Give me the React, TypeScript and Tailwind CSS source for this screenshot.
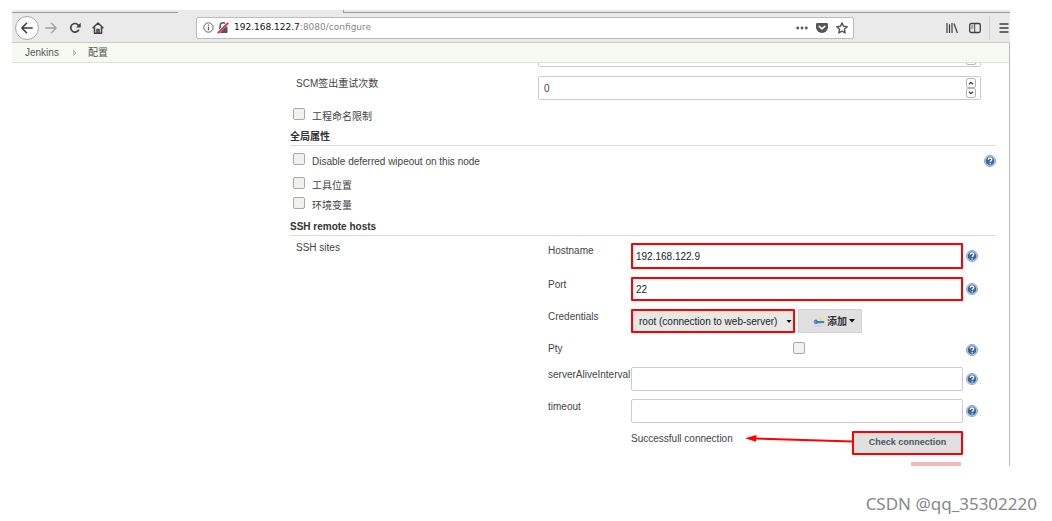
import type { ReactNode } from "react";

const nodeProperties = [
  { id: "wipeout", label: "Disable deferred wipeout on this node", help: true, className: "h-6" },
  { id: "tools", label: "工具位置", help: false, className: "h-5" },
  { id: "env", label: "环境变量", help: false, className: "h-5" },
];

function HelpIcon() {
  return (
    <button type="button" aria-label="Help" className="block h-3 w-3 shrink-0">
      <svg viewBox="0 0 12 12" className="h-3 w-3">
        <circle cx="6" cy="6" r="5.5" fill="#dbe5f3" stroke="#6d8bbb" strokeWidth="0.8" />
        <circle cx="6" cy="6" r="4.4" fill="#3a65a5" />
        <path d="M4.300 4.800C4.300 3.400 5 3 6 3s1.800.6 1.800 1.600C7.800 5.700 6.300 5.700 6.300 7" fill="none" stroke="#fff" strokeWidth="1.3" />
        <circle cx="6.2" cy="8.8" r="0.8" fill="#fff" />
      </svg>
    </button>
  );
}

function Checkbox({ id }: { id: string }) {
  return (
    <input
      id={id}
      type="checkbox"
      className="block h-3 w-3 shrink-0 appearance-none rounded-[2px] border border-[#a9a9a5] bg-[#f1f1f0] checked:bg-[#3465a4]"
    />
  );
}

function Spinner() {
  return (
    <div className="absolute top-[2px] right-[5px] flex flex-col">
      <button type="button" aria-label="Increase" className="flex h-[10px] w-[10px] items-center justify-center rounded-[2px] border border-[#b5b5b5] bg-white">
        <svg viewBox="0 0 6 4" className="h-1 w-[6px]">
          <path d="M1 3.300L3 1.300L5 3.300" fill="none" stroke="#444" strokeWidth="1.3" />
        </svg>
      </button>
      <button type="button" aria-label="Decrease" className="flex h-[10px] w-[10px] items-center justify-center rounded-[2px] border border-[#b5b5b5] bg-white">
        <svg viewBox="0 0 6 4" className="h-1 w-[6px]">
          <path d="M1 .7L3 2.700L5 .7" fill="none" stroke="#444" strokeWidth="1.3" />
        </svg>
      </button>
    </div>
  );
}

function NumberField({ id, label, value }: { id: string; label?: string; value: string }) {
  return (
    <div className="relative h-6 w-full">
      <input
        id={id}
        type="number"
        aria-label={label}
        defaultValue={value}
        className="block h-6 w-full appearance-none rounded-[2px] border border-[#ccc] bg-white px-[5px] [appearance:textfield]"
      />
      <Spinner />
    </div>
  );
}

function SectionTitle({ children }: { children: ReactNode }) {
  return <h2 className="mr-[13px] h-[19px] border-b border-[#ddd] leading-5 font-bold text-[#333]">{children}</h2>;
}

function SiteRow({ id, label, help, children }: { id?: string; label?: string; help?: boolean; children: ReactNode }) {
  return (
    <div className="flex">
      <label htmlFor={id} className="w-[83px] shrink-0 leading-4 whitespace-nowrap">
        {label}
      </label>
      <div className="min-w-0 flex-1">{children}</div>
      <div className="flex w-[46px] shrink-0 items-center pl-[3px]">{help && <HelpIcon />}</div>
    </div>
  );
}

function TabStrip() {
  return (
    <div className="flex h-[3px] bg-[#eaeaea]">
      <div className="w-[166px] border-b border-[#999]" />
      <div className="w-[165px]" />
      <div className="flex-1 border-b border-l border-[#999]" />
    </div>
  );
}

function Toolbar() {
  return (
    <div className="flex h-[30px] items-center border-b border-[#ccc] bg-[#eaeaea] text-[#3f3f3f]">
      <div className="flex w-[184px] shrink-0 items-center pl-[3px]">
        <button type="button" aria-label="Back" className="flex h-6 w-6 items-center justify-center rounded-full border border-[#aaa] bg-[#fbfbfb]">
          <svg viewBox="0 0 12 12" className="h-3 w-3" fill="none" stroke="currentColor" strokeWidth="1.5" strokeLinecap="round" strokeLinejoin="round">
            <path d="M11.200 6H1M5.500 1.200L.9 6l4.600 4.800" />
          </svg>
        </button>
        <button type="button" aria-label="Forward" className="ml-[6px] text-[#a0a0a0]">
          <svg viewBox="0 0 12 12" className="h-3 w-3" fill="none" stroke="currentColor" strokeWidth="1.3" strokeLinecap="round" strokeLinejoin="round">
            <path d="M.8 6H11M6.500 1.200L11.100 6l-4.600 4.800" />
          </svg>
        </button>
        <button type="button" aria-label="Reload" className="ml-3">
          <svg viewBox="0 0 12 12" className="h-3 w-3" fill="none" stroke="currentColor" strokeWidth="1.7">
            <path d="M9.900 7.600A4.300 4.300 0 1 1 9.500 3.300" />
            <path d="M11.700.7V5.400H7z" fill="currentColor" stroke="none" />
          </svg>
        </button>
        <button type="button" aria-label="Home" className="ml-[11px]">
          <svg viewBox="0 0 12 12" className="h-3 w-3" fill="none" stroke="currentColor" strokeWidth="1.5" strokeLinejoin="round">
            <path d="M.6 6.300L6 1l5.400 5.300M2.500 5.500v5.800h7V5.500" />
            <path d="M5 11.300V7.500h2v3.800" />
          </svg>
        </button>
      </div>
      <div className="flex h-[22px] min-w-0 flex-1 items-center rounded-[2px] border border-[#bbb] bg-white pr-[5px] pl-[6px]">
        <svg viewBox="0 0 11 11" className="h-[11px] w-[11px] shrink-0" fill="none" stroke="#555">
          <circle cx="5.500" cy="5.500" r="4.700" strokeWidth="0.9" />
          <path d="M5.500 4.800V8.200M5.500 2.600V3.800" strokeWidth="1.1" />
        </svg>
        <svg viewBox="0 0 12 12" className="ml-[3px] h-3 w-3 shrink-0">
          <path d="M3.200 5.500V3.600a2.800 2.800 0 0 1 5.600 0v1.900" fill="none" stroke="#555" strokeWidth="1.5" />
          <rect x="2" y="5" width="8.500" height="6" rx="0.8" fill="#555" />
          <path d="M.8 10.800L10.800.8" stroke="#fff" strokeWidth="3" />
          <path d="M.8 11.200L11.200.8" stroke="#ed1b48" strokeWidth="1.800" />
        </svg>
        <div className="ml-[5px] flex-1 truncate font-['DejaVu_Sans',sans-serif] text-[9px] text-[#888]">
          <span className="text-[#111]">192.168.122.7</span>:8080/configure
        </div>
        <button type="button" aria-label="Page actions">
          <svg viewBox="0 0 12 4" className="h-1 w-3" fill="#555">
            <circle cx="1.700" cy="2" r="1.400" />
            <circle cx="6" cy="2" r="1.400" />
            <circle cx="10.300" cy="2" r="1.400" />
          </svg>
        </button>
        <button type="button" aria-label="Save to Pocket" className="ml-2">
          <svg viewBox="0 0 12 12" className="h-3 w-3">
            <path d="M1.300 1h9.400q1.300 0 1.300 1.300V5.300a6 5.700 0 0 1-12 0V2.300Q0 1 1.300 1z" fill="#555" />
            <path d="M3.200 4.200L6 6.900l2.800-2.700" fill="none" stroke="#fff" strokeWidth="1.500" strokeLinecap="round" strokeLinejoin="round" />
          </svg>
        </button>
        <button type="button" aria-label="Bookmark" className="ml-2">
          <svg viewBox="0 0 12 12" className="h-3 w-3">
            <path d="M6 .9l1.500 3.400 3.700.4-2.800 2.500.8 3.700L6 9.100l-3.200 1.800.8-3.700L.8 4.700l3.700-.4z" fill="none" stroke="#555" strokeWidth="1.400" strokeLinejoin="round" />
          </svg>
        </button>
      </div>
      <div className="flex h-full w-[156px] shrink-0 items-center justify-end">
        <button type="button" aria-label="Library">
          <svg viewBox="0 0 12 12" className="h-3 w-3" fill="none" stroke="currentColor" strokeWidth="1.200">
            <path d="M1 1v10M3.500 2.200V11M6 1v10M8 1.500L11.400 11" />
          </svg>
        </button>
        <button type="button" aria-label="Sidebars" className="ml-[11px]">
          <svg viewBox="0 0 12 12" className="h-3 w-3" fill="none" stroke="currentColor">
            <rect x="0.700" y="1.500" width="10.600" height="9" rx="1.500" strokeWidth="1.300" />
            <path d="M5.700 1.500v9" />
            <path d="M2 4h2.300M2 6h2.300" strokeWidth="0.800" />
          </svg>
        </button>
        <div className="mx-2 h-6 w-px bg-[#d0d0d0]" />
        <button type="button" aria-label="Menu" className="mr-px ml-px">
          <svg viewBox="0 0 10 12" className="h-3 w-[10px]" fill="none" stroke="currentColor" strokeWidth="1.400" strokeLinecap="round">
            <path d="M1 2h8M1 6h8M1 10h8" />
          </svg>
        </button>
      </div>
    </div>
  );
}

function SshSites() {
  return (
    <div className="relative flex min-w-0 flex-1 flex-col gap-2">
      <SiteRow id="hostname" label="Hostname" help>
        <input id="hostname" defaultValue="192.168.122.9" className="block h-[26px] w-full rounded-[1px] border-2 border-[#ff0000] bg-white px-[3px] text-[#222]" />
      </SiteRow>
      <SiteRow id="port" label="Port" help>
        <input id="port" defaultValue="22" className="block h-6 w-full rounded-[1px] border-2 border-[#ff0000] bg-white px-[3px] text-[#222]" />
      </SiteRow>
      <SiteRow id="credentials" label="Credentials">
        <div className="flex gap-[3px]">
          <div className="relative w-[164px]">
            <select id="credentials" className="block h-6 w-full appearance-none rounded-[1px] border-2 border-[#ff0000] bg-[#e8e8e7] pl-[6px] text-[#222]">
              <option>root (connection to web-server)</option>
            </select>
            <svg viewBox="0 0 6 4" className="pointer-events-none absolute top-[11px] right-[3px] h-1 w-[6px]">
              <path d="M.5 0h5L3 3z" fill="#111" />
            </svg>
          </div>
          <button type="button" className="flex h-6 w-16 items-center justify-center gap-[2px] border border-[#d2d2d2] bg-[#e0e0e0] pl-2 font-bold text-[#333]">
            <svg viewBox="0 0 12 12" className="h-3 w-3">
              <ellipse cx="6" cy="11" rx="4.500" ry="0.700" fill="#cdcdcd" />
              <path d="M7.500 1.800l.9 1.300 1.700.1-1 1.300.5 1.600-1.600-.6-1.500.8.1-1.700-1.200-1.200 1.600-.3z" fill="#f3e24c" />
              <path d="M2.600 4.500a2.300 2.300 0 0 1 2.200 1.400h6l.8 1-.8 1.300H9.600l-.6-.6-.7.6H4.800A2.300 2.300 0 1 1 2.600 4.500z" fill="#3f7fc4" />
              <circle cx="2" cy="6.800" r="0.600" fill="#e0e0e0" />
            </svg>
            添加
            <svg viewBox="0 0 6 4" className="h-1 w-[6px]">
              <path d="M0 0h6L3 3.500z" fill="#111" />
            </svg>
          </button>
        </div>
      </SiteRow>
      <SiteRow id="pty" label="Pty" help>
        <div className="flex h-[18px] items-start justify-center pt-px pl-1">
          <Checkbox id="pty" />
        </div>
      </SiteRow>
      <SiteRow id="interval" label="serverAliveInterval" help>
        <input id="interval" className="block h-6 w-full rounded-[2px] border border-[#ccc] bg-white px-[5px]" />
      </SiteRow>
      <SiteRow id="timeout" label="timeout" help>
        <input id="timeout" className="block h-6 w-full rounded-[2px] border border-[#ccc] bg-white px-[5px]" />
      </SiteRow>
      <SiteRow>
        <div className="flex justify-between">
          <span className="leading-4">Successfull connection</span>
          <button type="button" className="h-6 w-[111px] rounded-[1px] border-2 border-[#ff0000] bg-[#e0e0e0] text-[9px] font-bold text-[#4d545d]">
            Check connection
          </button>
        </div>
        <div className="mt-[7px] flex h-1 justify-end pr-[2px]">
          <span className="w-[50px] bg-[#efb9b9]" />
        </div>
      </SiteRow>
      <svg viewBox="0 0 108 10" className="pointer-events-none absolute right-[156px] bottom-[21px] h-[10px] w-[108px]">
        <path d="M8 3.500L108 6.500" stroke="#ff0000" strokeWidth="2" />
        <path d="M0 3.300L11.500 0L11 6.800z" fill="#ff0000" />
      </svg>
    </div>
  );
}

export default function App() {
  return (
    <div className="bg-white pt-[10px] pl-3 font-['Liberation_Sans','Noto_Sans_CJK_SC',sans-serif] text-[10px] text-[#444]">
      <div className="mr-[42px]">
        <TabStrip />
        <Toolbar />
        <div className="border-r border-[#bbb]">
          <nav className="flex h-5 items-center border-b border-[#dfe3da] bg-[#f6faf2] pl-[13px] text-[#555]">
            <a href="#jenkins">Jenkins</a>
            <svg viewBox="0 0 4 6" className="mr-[11px] ml-[14px] h-[6px] w-1">
              <path d="M.7.7L3 3L.7 5.300z" fill="none" stroke="#999" strokeWidth="0.8" />
            </svg>
            <a href="#configure">配置</a>
          </nav>
          <div className="flex">
            <aside className="w-[278px] shrink-0" />
            <main className="min-w-0 flex-1">
              <div className="mr-7 ml-[248px] flex h-1 items-end overflow-hidden">
                <NumberField id="quiet" label="Quiet period" value="" />
              </div>
              <div className="mt-[9px] mr-7 flex">
                <label htmlFor="scm" className="w-[248px] shrink-0 pl-[6px] leading-4">
                  SCM签出重试次数
                </label>
                <NumberField id="scm" value="0" />
              </div>
              <div className="mt-2 flex h-[19px] items-start pl-[3px]">
                <Checkbox id="naming" />
                <label htmlFor="naming" className="pl-[7px] leading-[18px]">
                  工程命名限制
                </label>
              </div>
              <SectionTitle>全局属性</SectionTitle>
              <div className="pt-[7px]">
                {nodeProperties.map((item) => (
                  <div key={item.id} className={`flex items-start pr-[13px] pl-[3px] ${item.className}`}>
                    <Checkbox id={item.id} />
                    <label htmlFor={item.id} className="flex-1 pl-[7px] leading-[18px]">
                      {item.label}
                    </label>
                    {item.help && (
                      <div className="pt-[2px]">
                        <HelpIcon />
                      </div>
                    )}
                  </div>
                ))}
              </div>
              <SectionTitle>SSH remote hosts</SectionTitle>
              <div className="flex pt-[7px]">
                <div className="w-[258px] shrink-0 pl-[6px] leading-[10px]">SSH sites</div>
                <SshSites />
              </div>
            </main>
          </div>
        </div>
      </div>
      <footer className="pt-7 pr-[15px] text-right font-['Noto_Sans',sans-serif] text-[17px] leading-5 text-[#888]">CSDN @qq_35302220</footer>
    </div>
  );
}
